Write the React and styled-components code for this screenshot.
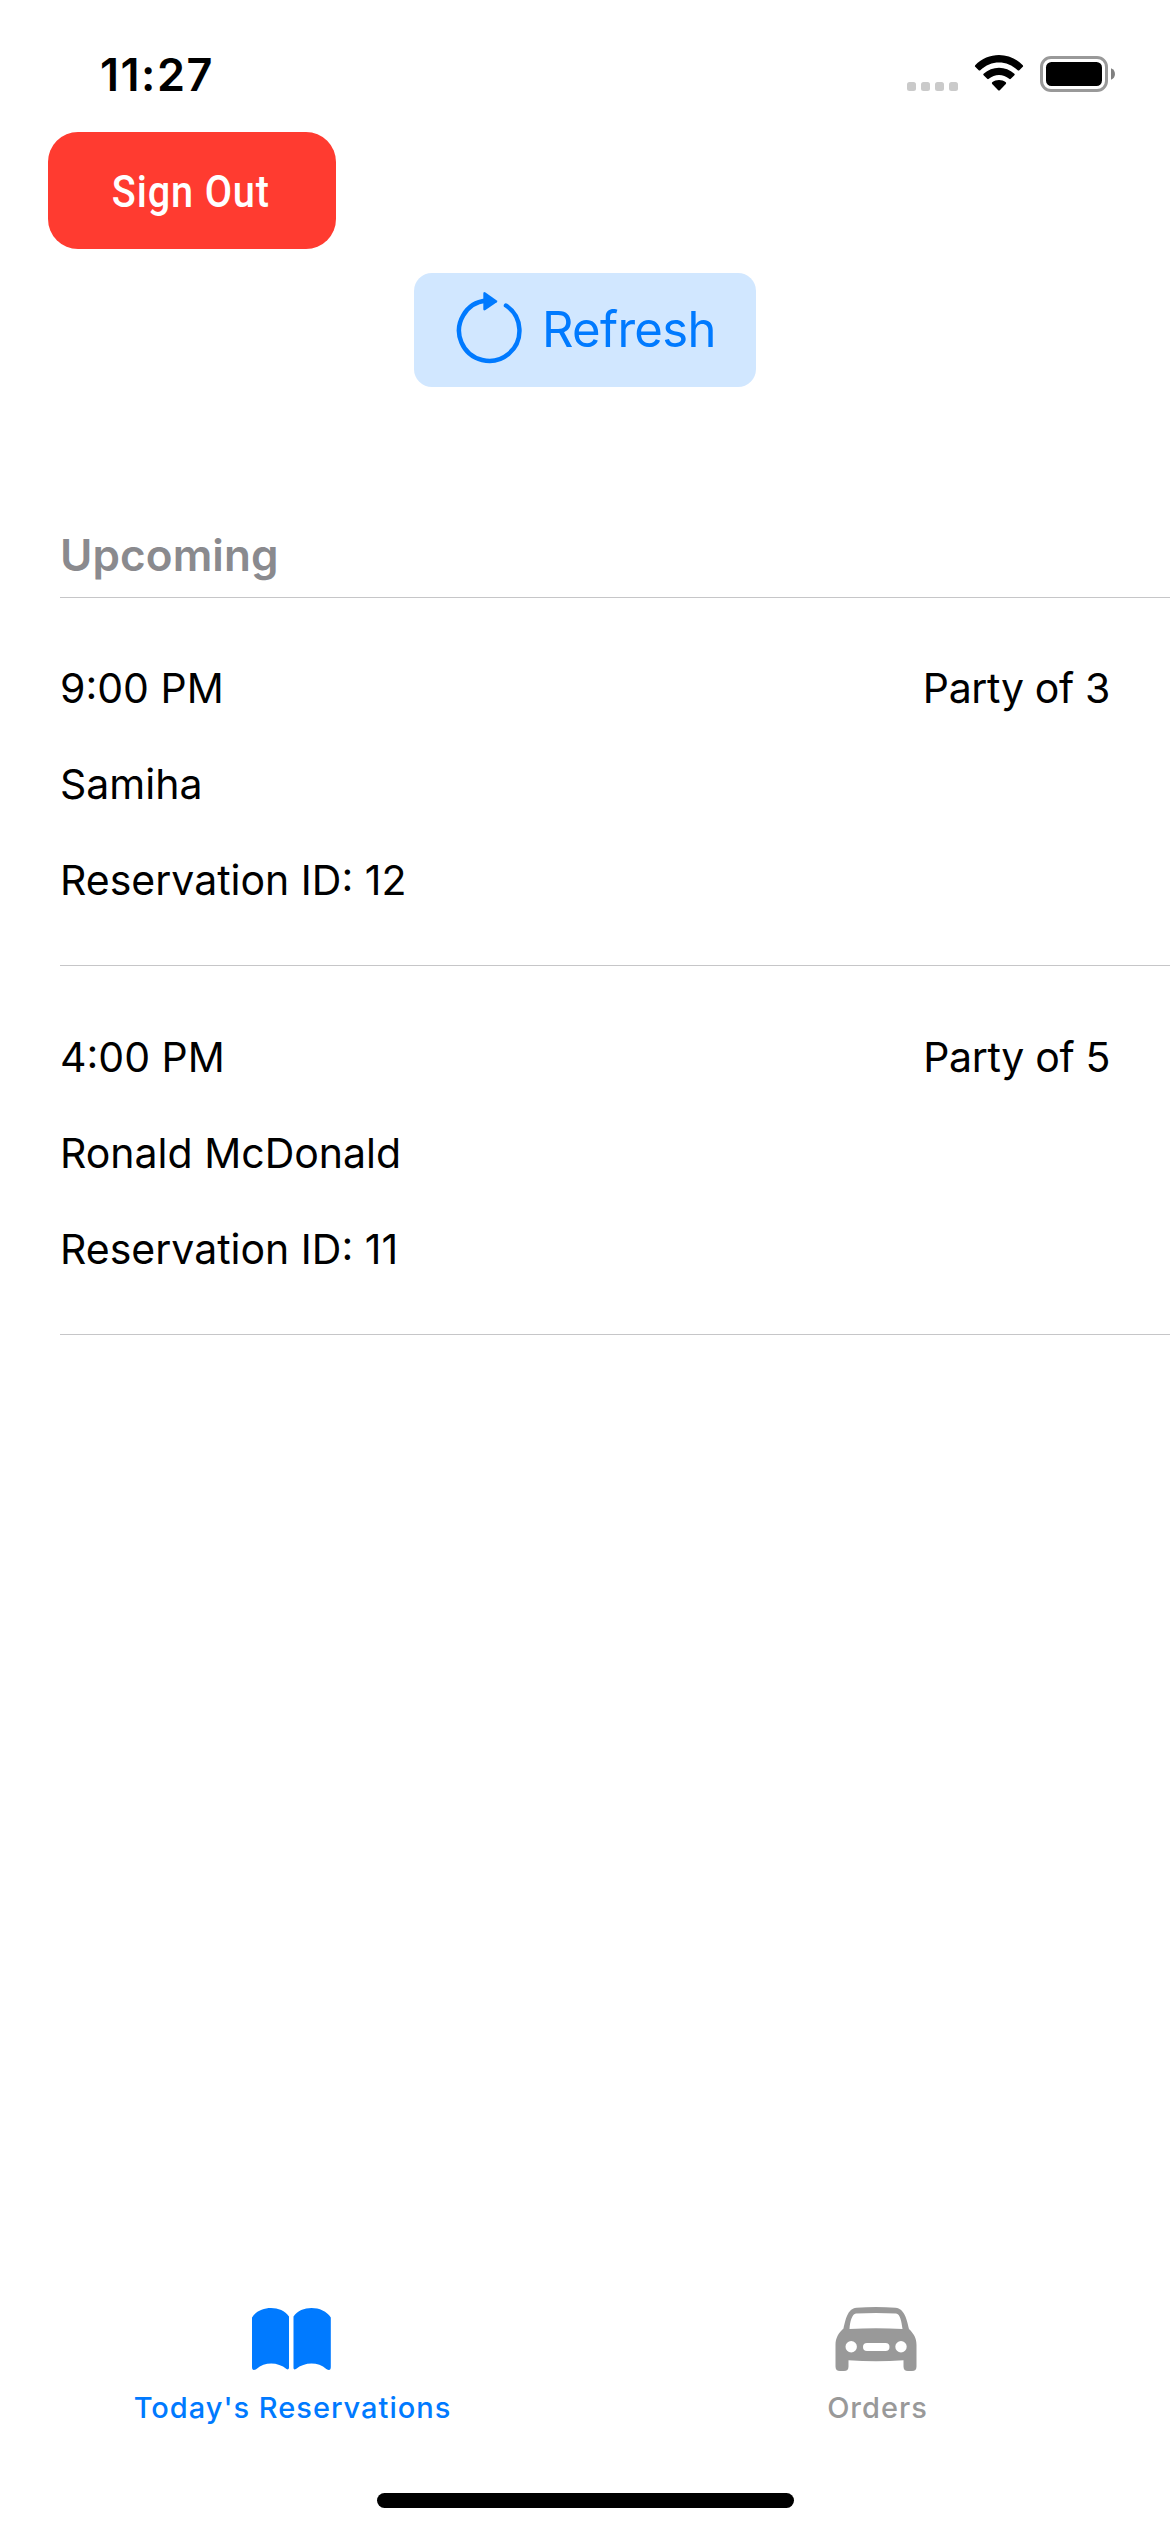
import React from "react";
import styled, { createGlobalStyle } from "styled-components";

const GlobalStyle = createGlobalStyle`
  * { box-sizing: border-box; }
  html, body { margin: 0; padding: 0; background: #fff; }
  button { border: 0; margin: 0; padding: 0; font: inherit; color: inherit; background: none; cursor: pointer; }
  svg { display: block; flex: none; }
`;

const Screen = styled.div`
  display: flex;
  flex-direction: column;
  width: 1170px;
  height: 2532px;
  overflow: hidden;
  background: #fff;
  color: #000;
  font-family: Inter, "Liberation Sans", sans-serif;
`;

const StatusBar = styled.header`
  display: flex;
  justify-content: space-between;
  height: 132px;
  padding: 49px 54px 0 100px;
  flex: none;
`;

const StatusIconsSlot = styled.div`
  padding-top: 5px;
`;

const Clock = styled.span`
  height: 52px;
  font-size: 45px;
  font-weight: 600;
  line-height: 52px;
  letter-spacing: 1.5px;
  white-space: nowrap;
`;

const Label = styled.span`
  font-size: ${(p) => p.$size}px;
  font-weight: ${(p) => p.$weight || 400};
  letter-spacing: ${(p) => p.$track || 0}px;
  line-height: 60px;
  color: ${(p) => p.$color || "inherit"};
  white-space: nowrap;
`;

const SignOutButton = styled.button`
  display: flex;
  align-items: center;
  justify-content: center;
  width: 288px;
  height: 117px;
  margin-left: 48px;
  padding: 3px 2px 0 0;
  flex: none;
  border-radius: 30px;
  background: #ff3b30;
  color: #fff;
`;

const SignOutText = styled.span`
  font-family: Roboto, sans-serif;
  font-size: 44px;
  font-weight: 500;
  line-height: 60px;
  letter-spacing: 1px;
  white-space: nowrap;
  transform: scaleX(0.9);
`;

const RefreshButton = styled.button`
  display: flex;
  align-items: center;
  align-self: center;
  gap: 17px;
  width: 342px;
  height: 114px;
  margin-top: 24px;
  padding-left: 41px;
  flex: none;
  border-radius: 18px;
  background: #d1e7ff;
  color: #007aff;
`;

const List = styled.main`
  flex: 1;
  padding: 132px 0 0 60px;
`;

const SectionHeader = styled.h2`
  display: flex;
  height: 79px;
  margin: 0;
  padding-top: 6px;
  border-bottom: 1px solid #c6c6c8;
`;

const Reservation = styled.article`
  display: flex;
  justify-content: space-between;
  height: 368px;
  padding: 60px 60px 0 0;
  border-bottom: 1px solid #c6c6c8;

  & + & {
    height: 369px;
    padding-top: 61px;
  }
`;

const Details = styled.div`
  display: flex;
  flex-direction: column;
  gap: 36px;
`;

const TabBar = styled.nav`
  display: grid;
  grid-template-columns: 1fr 1fr;
  height: 191px;
  flex: none;
`;

const Tab = styled.button`
  display: flex;
  flex-direction: column;
  align-items: center;
  padding-top: 5px;
  color: ${(p) => (p.$active ? "#007aff" : "#999")};
`;

const TabIcon = styled.span`
  height: 65px;
`;

const TabLabel = styled.span`
  margin-top: 16px;
  font-size: 29px;
  font-weight: 450;
  line-height: 40px;
  letter-spacing: 1px;
  white-space: nowrap;
`;

const HomeArea = styled.div`
  display: flex;
  justify-content: center;
  height: 39px;
  flex: none;
`;

const HomeIndicator = styled.div`
  width: 417px;
  height: 15px;
  border-radius: 7.5px;
  background: #000;
`;

const StatusIcons = () => (
  <svg width="209" height="40" viewBox="907 54 209 40">
    <g fill="#cacaca">
      {[907, 921, 935, 949].map((x) => (
        <rect key={x} x={x} y="82" width="9" height="9" rx="2.5" />
      ))}
    </g>
    <path d="M975.2 65.2C988.4 51.7 1009.6 51.7 1022.8 65.2Q1023.5 66 1022.8 66.8L1019.3 70.2Q1018.5 71 1017.7 70.2C1007 59.8 991 59.8 980.3 70.2Q979.5 71 978.7 70.2L975.2 66.8Q974.5 66 975.2 65.2Z" />
    <path d="M983.6 73.7C992.2 65.7 1005.8 65.7 1014.4 73.7Q1015.2 74.5 1014.4 75.3L1010.8 78.8Q1010 79.5 1009.2 78.8C1003.2 73.7 994.8 73.7 988.8 78.8Q988 79.5 987.2 78.8L983.6 75.3Q982.8 74.5 983.6 73.7Z" />
    <path d="M992.2 82.2C996.2 79.3 1001.8 79.3 1005.8 82.2Q1006.6 83 1005.8 83.9L999.8 90.2Q999 91 998.2 90.2L992.2 83.9Q991.4 83 992.2 82.2Z" />
    <rect x="1041.5" y="57.5" width="65" height="33" rx="9.5" fill="none" stroke="#999" strokeWidth="3" />
    <rect x="1046" y="62" width="56" height="24" rx="5.5" />
    <path d="M1111 68.2C1116.3 70.2 1116.3 77.8 1111 79.8Z" fill="#808080" />
  </svg>
);

const RefreshIcon = () => (
  <svg width="70" height="78" viewBox="455 291 70 78">
    <path d="M506 305.5A30.2 30.2 0 1 1 486 300.6" fill="none" stroke="currentColor" strokeWidth="4.5" strokeLinecap="round" />
    <path d="M483.3 293.8Q483.3 291.2 485.5 292.6L496.8 300.4Q498 301.3 496.8 302.2L485.5 310Q483.3 311.4 483.3 308.8Z" fill="currentColor" />
  </svg>
);

const BookIcon = () => (
  <svg width="83" height="65" viewBox="251 2307 83 65">
    <g fill="currentColor">
      <path d="M252 2317.5C259 2305.5 281 2304.5 289 2316.5V2368Q288.5 2370.3 286.5 2369C278 2362 265 2361.5 256.5 2369Q252 2371.5 252 2367Z" />
      <path d="M293.5 2316.5C301.5 2304.5 323.5 2305.5 330.8 2317.5V2367Q330.8 2371.5 326.3 2369C318 2361.5 304.5 2362 296 2369Q293.5 2370.3 293.5 2368Z" />
    </g>
  </svg>
);

const CarIcon = () => (
  <svg width="86" height="65" viewBox="834.5 2307 86 65">
    <path fill="currentColor" fillRule="evenodd" d="M835 2345C835 2338 838 2333 843 2328.5C845 2320 847 2308.5 856 2307.8Q875.5 2306.3 895 2307.8C904 2308.5 906.5 2320 908.5 2329C913.5 2334 916 2338 916 2345V2366.5Q916 2371 911.5 2371H907.5Q903 2371 903 2366.5V2360.2Q875.5 2362.5 848 2360.2V2366.5Q848 2371 843.5 2371H839.5Q835 2371 835 2366.5ZM849 2329Q875.5 2327.4 902 2329C901 2322 899.8 2314 895.5 2313.6Q875.5 2312.4 855.5 2313.6C851.5 2314 849.5 2322 849 2329ZM845 2346.7a5.7 5.7 0 1 0 11.4 0a5.7 5.7 0 1 0 -11.4 0ZM894.8 2346.7a5.7 5.7 0 1 0 11.4 0a5.7 5.7 0 1 0 -11.4 0ZM866.5 2343a4 4 0 0 0 0 8H885a4 4 0 0 0 0 -8Z" />
  </svg>
);

const reservations = [
  { id: 12, time: "9:00 PM", name: "Samiha", party: 3 },
  { id: 11, time: "4:00 PM", name: "Ronald McDonald", party: 5 },
];

export default function App() {
  return (
    <Screen>
      <GlobalStyle />
      <StatusBar>
        <Clock>11:27</Clock>
        <StatusIconsSlot>
          <StatusIcons />
        </StatusIconsSlot>
      </StatusBar>
      <SignOutButton>
        <SignOutText>Sign Out</SignOutText>
      </SignOutButton>
      <RefreshButton>
        <RefreshIcon />
        <Label $size={49} $track={-0.7}>Refresh</Label>
      </RefreshButton>
      <List>
        <SectionHeader>
          <Label $size={44} $weight={600} $track={0.1} $color="#8a8a8e">Upcoming</Label>
        </SectionHeader>
        {reservations.map((r) => (
          <Reservation key={r.id}>
            <Details>
              <Label $size={41}>{r.time}</Label>
              <Label $size={41}>{r.name}</Label>
              <Label $size={41}>{`Reservation ID: ${r.id}`}</Label>
            </Details>
            <Label $size={41} $track={-0.35}>{`Party of ${r.party}`}</Label>
          </Reservation>
        ))}
      </List>
      <TabBar>
        <Tab $active>
          <TabIcon>
            <BookIcon />
          </TabIcon>
          <TabLabel>Today's Reservations</TabLabel>
        </Tab>
        <Tab>
          <TabIcon>
            <CarIcon />
          </TabIcon>
          <TabLabel>Orders</TabLabel>
        </Tab>
      </TabBar>
      <HomeArea>
        <HomeIndicator />
      </HomeArea>
    </Screen>
  );
}
